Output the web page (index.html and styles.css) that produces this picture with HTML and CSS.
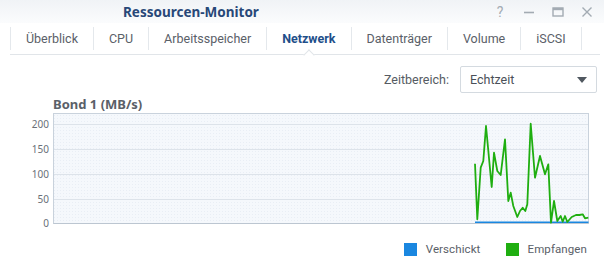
FILE: index.html
```html
<!DOCTYPE html>
<html lang="de">
<head>
  <meta charset="UTF-8">
  <title>Ressourcen-Monitor</title>
  <link rel="stylesheet" href="styles.css">
</head>
<body>

<div class="fenster">
  <div class="titelleiste">
    <span class="titel">Ressourcen-Monitor</span>
    <div class="steuerung">
      <span class="knopf">?</span>
      <svg class="knopf-svg" width="14" height="14" viewBox="0 0 14 14"><path d="M2 7.5h10" stroke="#a3abb3" stroke-width="1.6"/></svg>
      <svg class="knopf-svg" width="14" height="14" viewBox="0 0 14 14"><rect x="2" y="3" width="10" height="8" fill="none" stroke="#a3abb3" stroke-width="1.4"/><path d="M2 4h10" stroke="#a3abb3" stroke-width="2.4"/></svg>
      <svg class="knopf-svg" width="14" height="14" viewBox="0 0 14 14"><path d="M2.5 2.5l9 9M11.5 2.5l-9 9" stroke="#a3abb3" stroke-width="1.4"/></svg>
    </div>
  </div>

  <nav class="reiter">
    <a class="reiter-item">Überblick</a>
    <a class="reiter-item">CPU</a>
    <a class="reiter-item">Arbeitsspeicher</a>
    <a class="reiter-item aktiv">Netzwerk</a>
    <a class="reiter-item">Datenträger</a>
    <a class="reiter-item">Volume</a>
    <a class="reiter-item">iSCSI</a>
  </nav>

  <div class="werkzeuge">
    <label class="zeit-label">Zeitbereich:</label>
    <div class="auswahl">
      <span>Echtzeit</span>
      <svg width="10" height="6" viewBox="0 0 10 6"><path d="M0 0h10L5 6z" fill="#505860"/></svg>
    </div>
  </div>

  <div class="diagramm">
    <h2 class="diagramm-titel">Bond 1 (MB/s)</h2>
    <svg class="plot" width="566" height="118" viewBox="30 110 566 118">
      <defs>
        <pattern id="punkte" width="3" height="3" patternUnits="userSpaceOnUse">
          <rect width="3" height="3" fill="#f5f8fc"/>
          <rect width="1" height="1" fill="#e9eef5"/>
        </pattern>
      </defs>
      <rect x="53.5" y="112.5" width="535" height="110" fill="url(#punkte)" stroke="#c9d2dc"/>
      <g stroke="#dde3ea" stroke-width="1">
        <path d="M54 123.5h534M54 148.5h534M54 173.5h534M54 198.5h534"/>
      </g>
      <path d="M53.5 222.5h535" stroke="#bcc6d1"/>
      <g class="achse" text-anchor="end">
        <text x="49" y="127">200</text>
        <text x="49" y="152">150</text>
        <text x="49" y="177">100</text>
        <text x="49" y="202">50</text>
        <text x="49" y="226">0</text>
      </g>
      <path d="M475 221.3H588.5" stroke="#1a87e0" stroke-width="1.6" fill="none"/>
      <polyline fill="none" stroke="#1fae10" stroke-width="1.8" stroke-linejoin="round"
        points="475,162.7 477.3,218.3 480.7,166.7 483.3,160 486,125 491.7,186 494,151.7 497.3,170 500.7,174 505,138.3 508.3,200 510.7,191.7 513.3,205 517.3,216 520,210 522.7,206.7 525.3,210 527.3,203.3 530.7,122.7 535,176.7 540,155 545,173.3 548.3,163.3 551,221.7 554,200 557.3,220 560.7,215 562.7,220.7 565,215 567.3,221 571.7,216 576,214 579.3,214 582.7,213.3 585,217.3 588.3,216.7"/>
    </svg>
  </div>

  <div class="legende">
    <span class="legende-item"><span class="farbe blau"></span>Verschickt</span>
    <span class="legende-item"><span class="farbe gruen"></span>Empfangen</span>
  </div>
</div>

</body>
</html>
```

FILE: styles.css
```css
body {
  margin: 0;
  font-family: Roboto, Arial, sans-serif;
  background-color: #fff;
  width: 604px;
  height: 259px;
  overflow: hidden;
}

.fenster {
  width: 604px;
}

.titelleiste {
  height: 23px;
  display: flex;
  align-items: center;
  justify-content: space-between;
  background: linear-gradient(to bottom, #f0f3f6, #fbfcfd);
  padding-left: 123px;
  padding-right: 10px;
}

.titel {
  font-family: "Noto Sans", Arial, sans-serif;
  font-size: 13.5px;
  font-weight: bold;
  color: #284878;
}

.steuerung {
  display: flex;
  align-items: center;
  gap: 15px;
}

.knopf {
  font-size: 14px;
  color: #a3abb3;
  width: 14px;
  text-align: center;
}

.knopf-svg {
  display: block;
}

.reiter {
  display: flex;
  margin: 2px 4px 0 10px;
  height: 29px;
  border-bottom: 1px solid #e1e5e9;
  position: relative;
}

.reiter-item {
  display: flex;
  align-items: center;
  border-left: 1px solid #e4e8ec;
  margin: 2px 0 4px;
  padding: 0 15px;
  font-size: 12.5px;
  color: #5a6068;
}

.reiter-item:last-child {
  border-right: 1px solid #e4e8ec;
}

.reiter-item.aktiv {
  font-weight: bold;
  color: #1f4f8a;
  position: relative;
}

.reiter-item.aktiv::after {
  content: "";
  position: absolute;
  left: 50%;
  bottom: -9px;
  width: 7px;
  height: 7px;
  margin-left: -4px;
  background: #fff;
  border-left: 1px solid #e1e5e9;
  border-top: 1px solid #e1e5e9;
  transform: rotate(45deg);
}

.werkzeuge {
  display: flex;
  justify-content: flex-end;
  align-items: center;
  gap: 11px;
  margin: 11px 7px 0 0;
}

.zeit-label {
  font-size: 12.5px;
  color: #555b62;
}

.auswahl {
  box-sizing: border-box;
  width: 137px;
  height: 27px;
  display: flex;
  justify-content: space-between;
  align-items: center;
  padding: 0 9px 0 9px;
  border: 1px solid #d4dae0;
  border-radius: 2px;
  font-size: 12.5px;
  color: #4a5058;
}

.diagramm {
  margin-top: 4px;
}

.diagramm-titel {
  margin: 0 0 0 53px;
  font-family: "Noto Sans", Arial, sans-serif;
  font-size: 13px;
  line-height: 15px;
  font-weight: bold;
  color: #5a6068;
}

.plot {
  display: block;
  margin: -1px 0 0 30px;
}

.achse {
  font-family: "Noto Sans", Arial, sans-serif;
  font-size: 10px;
  fill: #6a7078;
}

.legende {
  display: flex;
  justify-content: flex-end;
  gap: 25px;
  margin: 13px 17px 0 0;
}

.legende-item {
  display: flex;
  align-items: center;
  gap: 9px;
  font-size: 11.5px;
  letter-spacing: 0.1px;
  color: #5a6068;
}

.farbe {
  width: 13px;
  height: 13px;
}

.blau {
  background: #1a87e0;
}

.gruen {
  background: #1fae10;
}
```
